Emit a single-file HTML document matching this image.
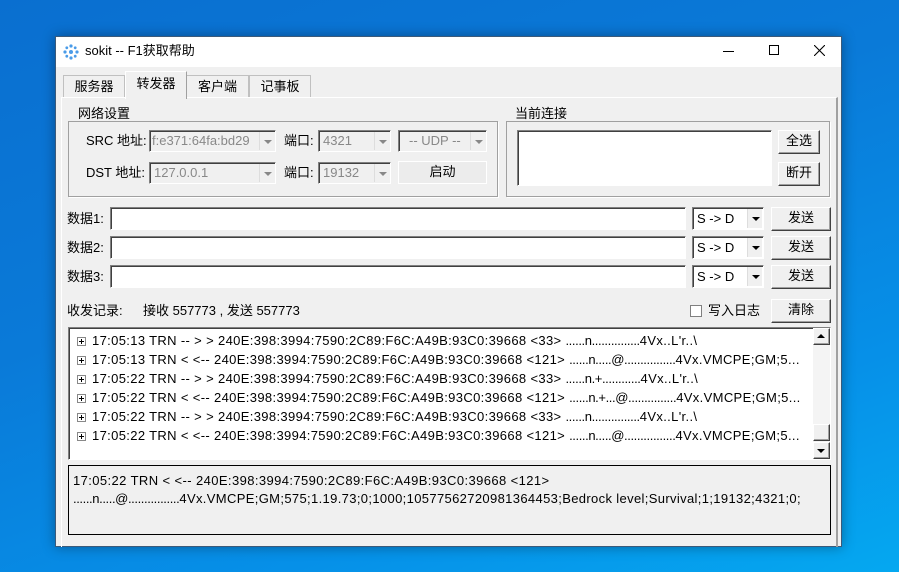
<!DOCTYPE html>
<html><head><meta charset="utf-8"><style>
*{margin:0;padding:0;box-sizing:border-box}
body{width:899px;height:572px;overflow:hidden;position:relative;font-family:"Liberation Sans","Noto Sans CJK SC",sans-serif;font-size:13px;color:#000;
background:linear-gradient(160deg,#0a6fd0 0%,#0a7ad8 40%,#0690e8 75%,#05a8f0 100%)}
.a{position:absolute}
.t{position:absolute;white-space:nowrap;line-height:16px}
.win{left:55px;top:36px;width:787px;height:511px;background:#f0f0f0;border:1px solid #3b5a7a;box-shadow:0 0 12px rgba(0,0,0,.35)}
.title{left:0;top:0;width:785px;height:30px;background:#fff}
.sunken{background:#fff;border-top:1px solid #808080;border-left:1px solid #808080;border-right:1px solid #fff;border-bottom:1px solid #fff;box-shadow:inset 1px 1px 0 #404040}
.dis{background:#f0f0f0;color:#888}
.btn{position:absolute;background:#f0f0f0;border-top:1px solid #fff;border-left:1px solid #fff;border-right:1px solid #404040;border-bottom:1px solid #404040;box-shadow:inset -1px -1px 0 #a0a0a0;text-align:center;line-height:20px}
.grp{position:absolute;border:1px solid #a0a0a0;box-shadow:1px 1px 0 #fff}
.lbl{position:absolute;background:#f0f0f0;padding:0 2px;line-height:14px}
.arrow{position:absolute;right:1px;top:1px;width:15px;bottom:1px;background:#f0f0f0;border-left:1px solid #ddd}
.arrow:after{content:"";position:absolute;left:4px;top:8px;border:4px solid transparent;border-top:4px solid #888;border-bottom:0}
.arrow.k:after{border-top-color:#000}
.tab{position:absolute;border:1px solid #c0c0c0;border-bottom:none;text-align:center;line-height:22px;background:#f0f0f0}
.row{position:absolute;left:8px;height:19px;line-height:19px;white-space:nowrap;font-size:13px;letter-spacing:0.35px}
.d{letter-spacing:-0.4px}
.pl{display:inline-block;width:9px;height:9px;border:1px solid #888;position:relative;margin-right:6px;vertical-align:-1px;background:#fff}
.pl:before{content:"";position:absolute;left:1px;top:3px;width:5px;height:1px;background:#000}
.pl:after{content:"";position:absolute;left:3px;top:1px;width:1px;height:5px;background:#000}
</style></head><body>
<div class="a win">
 <div class="a title">
  <svg class="a" style="left:7px;top:7px" width="16" height="16" viewBox="0 0 16 16"><g fill="#4a9be8"><circle cx="8" cy="2" r="1.6"/><circle cx="8" cy="14" r="1.6"/><circle cx="2" cy="8" r="1.6"/><circle cx="14" cy="8" r="1.6"/><circle cx="3.8" cy="3.8" r="1.4"/><circle cx="12.2" cy="3.8" r="1.4"/><circle cx="3.8" cy="12.2" r="1.4"/><circle cx="12.2" cy="12.2" r="1.4"/><circle cx="8" cy="8" r="2"/></g></svg>
  <div class="t" style="left:29px;top:6px;font-size:13px">sokit -- F1获取帮助</div>
  <div class="a" style="left:667px;top:14px;width:11px;height:1px;background:#000"></div>
  <div class="a" style="left:713px;top:8px;width:10px;height:10px;border:1px solid #000"></div>
  <svg class="a" style="left:758px;top:8px" width="11" height="11"><path d="M0 0L11 11M11 0L0 11" stroke="#000" stroke-width="1.1"/></svg>
 </div>
 <div class="tab" style="left:7px;top:38px;width:62px;height:23px">服务器</div>
 <div class="tab" style="left:130px;top:38px;width:63px;height:23px">客户端</div>
 <div class="tab" style="left:193px;top:38px;width:62px;height:23px">记事板</div>
 <div class="a" style="left:5px;top:60px;width:777px;height:450px;border-top:1px solid #fff;border-left:1px solid #fff;border-right:2px solid #a0a0a0"></div>
 <div class="tab" style="left:69px;top:34px;width:62px;height:28px;border-color:#fff #a0a0a0 #fff #fff;line-height:24px">转发器</div>
 <div class="grp" style="left:12px;top:84px;width:430px;height:76px"></div>
 <div class="lbl" style="left:20px;top:70px">网络设置</div>
 <div class="t" style="left:30px;top:96px">SRC 地址:</div>
 <div class="a sunken dis" style="left:93px;top:93px;width:127px;height:22px"><div class="t" style="left:2px;top:2px">f:e371:64fa:bd29</div><div class="arrow"></div></div>
 <div class="t" style="left:228px;top:96px">端口:</div>
 <div class="a sunken dis" style="left:262px;top:93px;width:73px;height:22px"><div class="t" style="left:4px;top:2px">4321</div><div class="arrow"></div></div>
 <div class="a sunken dis" style="left:342px;top:93px;width:89px;height:22px"><div class="t" style="left:10px;top:2px">-- UDP --</div><div class="arrow"></div></div>
 <div class="t" style="left:30px;top:128px">DST 地址:</div>
 <div class="a sunken dis" style="left:93px;top:125px;width:127px;height:22px"><div class="t" style="left:4px;top:2px">127.0.0.1</div><div class="arrow"></div></div>
 <div class="t" style="left:228px;top:128px">端口:</div>
 <div class="a sunken dis" style="left:262px;top:125px;width:73px;height:22px"><div class="t" style="left:4px;top:2px">19132</div><div class="arrow"></div></div>
 <div class="btn" style="left:342px;top:124px;width:89px;height:23px;border-color:#fff;box-shadow:none;background:#ececec">启动</div>
 <div class="grp" style="left:450px;top:84px;width:324px;height:76px"></div>
 <div class="lbl" style="left:457px;top:70px">当前连接</div>
 <div class="a sunken" style="left:461px;top:93px;width:255px;height:56px"></div>
 <div class="btn" style="left:722px;top:93px;width:42px;height:24px">全选</div>
 <div class="btn" style="left:722px;top:125px;width:42px;height:24px">断开</div>
 <div class="t" style="left:11px;top:174px">数据1:</div>
 <div class="a sunken" style="left:54px;top:170px;width:576px;height:23px"></div>
 <div class="a sunken" style="left:636px;top:170px;width:72px;height:23px"><div class="t" style="left:4px;top:3px">S -&gt; D</div><div class="arrow k"></div></div>
 <div class="btn" style="left:715px;top:170px;width:60px;height:24px">发送</div>
 <div class="t" style="left:11px;top:203px">数据2:</div>
 <div class="a sunken" style="left:54px;top:199px;width:576px;height:23px"></div>
 <div class="a sunken" style="left:636px;top:199px;width:72px;height:23px"><div class="t" style="left:4px;top:3px">S -&gt; D</div><div class="arrow k"></div></div>
 <div class="btn" style="left:715px;top:199px;width:60px;height:24px">发送</div>
 <div class="t" style="left:11px;top:232px">数据3:</div>
 <div class="a sunken" style="left:54px;top:228px;width:576px;height:23px"></div>
 <div class="a sunken" style="left:636px;top:228px;width:72px;height:23px"><div class="t" style="left:4px;top:3px">S -&gt; D</div><div class="arrow k"></div></div>
 <div class="btn" style="left:715px;top:228px;width:60px;height:24px">发送</div>
 <div class="t" style="left:11px;top:266px">收发记录:</div>
 <div class="t" style="left:87px;top:266px">接收 557773 , 发送 557773</div>
 <div class="a" style="left:634px;top:268px;width:12px;height:12px;background:#fff;border:1px solid #808080"></div>
 <div class="t" style="left:652px;top:266px">写入日志</div>
 <div class="btn" style="left:715px;top:262px;width:60px;height:24px">清除</div>
 <div class="a sunken" style="left:12px;top:290px;width:763px;height:133px;overflow:hidden">
  <div class="row" style="top:3px"><span class="pl"></span>17:05:13 TRN -- &gt; &gt; 240E:398:3994:7590:2C89:F6C:A49B:93C0:39668 &lt;33&gt; <span class="d">......n...............</span>4Vx..L'r..\</div>
  <div class="row" style="top:22px"><span class="pl"></span>17:05:13 TRN &lt; &lt;-- 240E:398:3994:7590:2C89:F6C:A49B:93C0:39668 &lt;121&gt; <span class="d">......n.....@................</span>4Vx.VMCPE;GM;5...</div>
  <div class="row" style="top:41px"><span class="pl"></span>17:05:22 TRN -- &gt; &gt; 240E:398:3994:7590:2C89:F6C:A49B:93C0:39668 &lt;33&gt; <span class="d">......n.+............</span>4Vx..L'r..\</div>
  <div class="row" style="top:60px"><span class="pl"></span>17:05:22 TRN &lt; &lt;-- 240E:398:3994:7590:2C89:F6C:A49B:93C0:39668 &lt;121&gt; <span class="d">......n.+...@...............</span>4Vx.VMCPE;GM;5...</div>
  <div class="row" style="top:79px"><span class="pl"></span>17:05:22 TRN -- &gt; &gt; 240E:398:3994:7590:2C89:F6C:A49B:93C0:39668 &lt;33&gt; <span class="d">......n...............</span>4Vx..L'r..\</div>
  <div class="row" style="top:98px"><span class="pl"></span>17:05:22 TRN &lt; &lt;-- 240E:398:3994:7590:2C89:F6C:A49B:93C0:39668 &lt;121&gt; <span class="d">......n.....@................</span>4Vx.VMCPE;GM;5...</div>
  <div class="a" style="right:0;top:0;width:17px;height:131px;background:#f4f4f4">
   <div class="btn" style="left:0;top:0;width:17px;height:17px"></div>
   <div class="a" style="left:4px;top:6px;border:4px solid transparent;border-bottom:4px solid #000;border-top:0"></div>
   <div class="btn" style="left:0;top:96px;width:17px;height:17px"></div>
   <div class="btn" style="left:0;top:114px;width:17px;height:17px"></div>
   <div class="a" style="left:4px;top:121px;border:4px solid transparent;border-top:4px solid #000;border-bottom:0"></div>
  </div>
 </div>
 <div class="a" style="left:12px;top:428px;width:763px;height:70px;border:1px solid #000;background:#f0f0f0;overflow:hidden">
  <div class="t" style="left:4px;top:7px;letter-spacing:0.4px">17:05:22 TRN &lt; &lt;-- 240E:398:3994:7590:2C89:F6C:A49B:93C0:39668 &lt;121&gt;</div>
  <div class="t" style="left:4px;top:25px;letter-spacing:0.35px"><span class="d">......n.....@................</span>4Vx.VMCPE;GM;575;1.19.73;0;1000;10577562720981364453;Bedrock level;Survival;1;19132;4321;0;</div>
 </div>
</div>
</body></html>
